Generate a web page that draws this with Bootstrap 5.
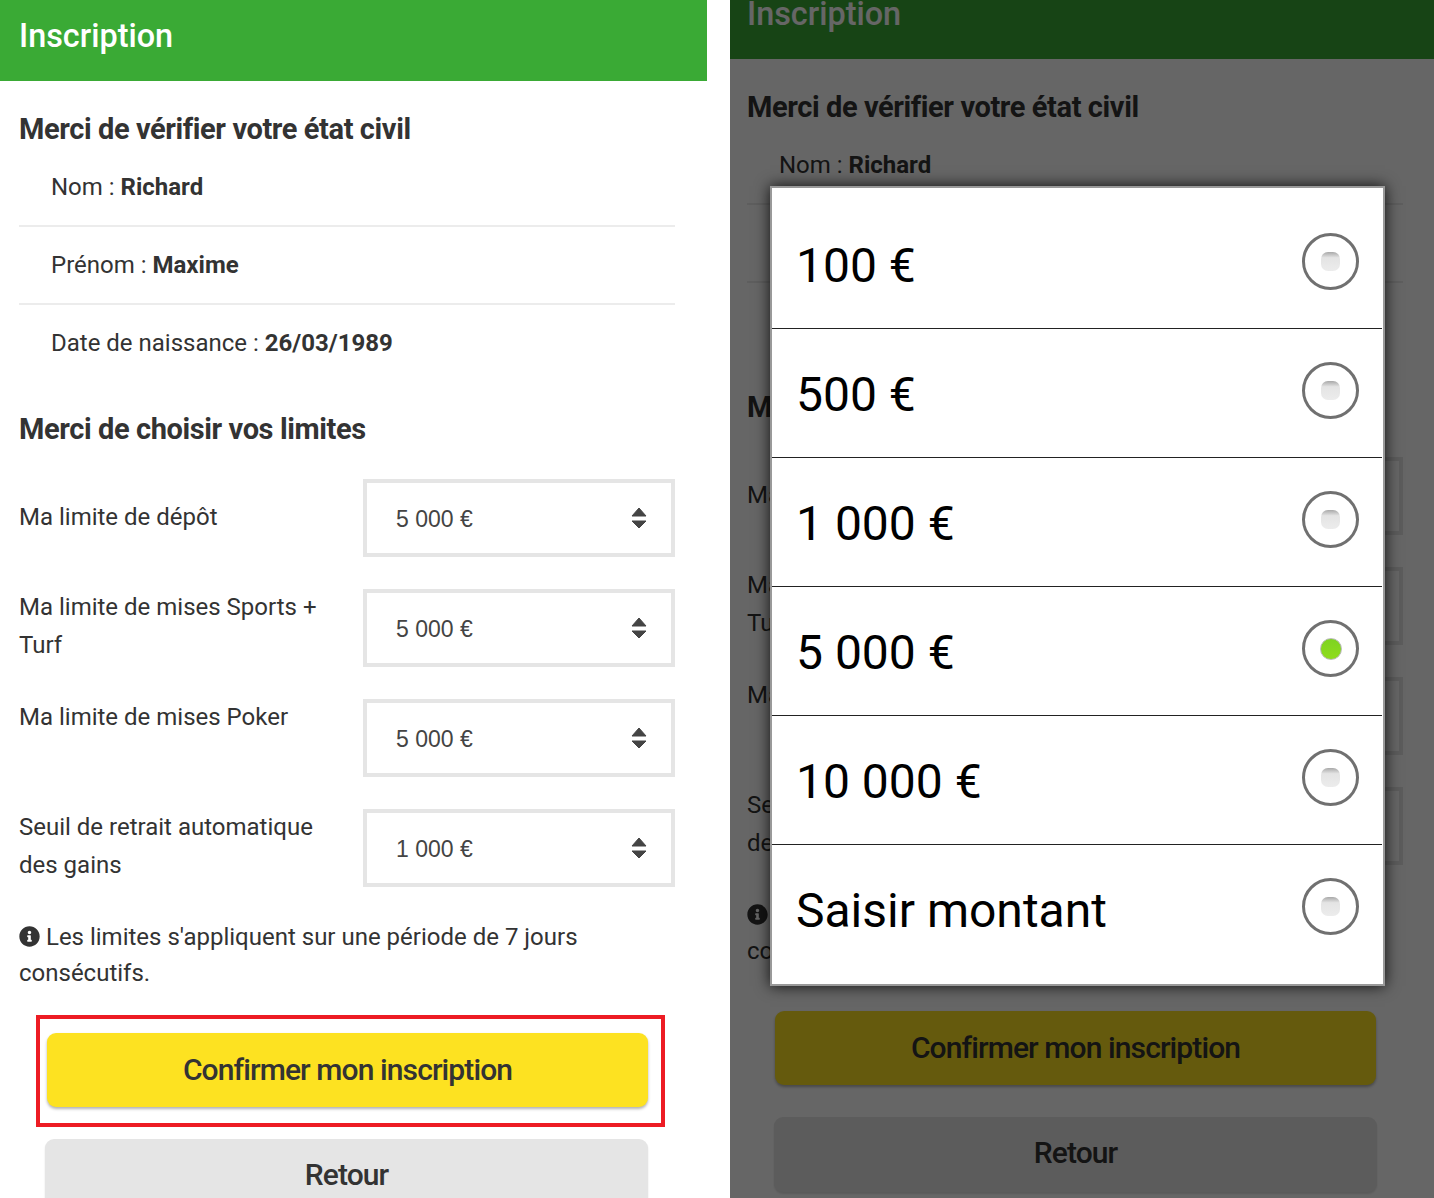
<!DOCTYPE html>
<html lang="fr">
<head>
  <meta charset="UTF-8">
  <meta name="viewport" content="width=device-width, initial-scale=1.0">
  <title>Inscription</title>
  <link href="https://cdn.jsdelivr.net/npm/bootstrap@5.3.0/dist/css/bootstrap.min.css" rel="stylesheet">
  <style>
    html, body { height: 1198px; overflow: hidden; }
    body { background: #fff; color: #333; font-family: Roboto, "Liberation Sans", sans-serif; font-size: 24px; }
    .phone { height: 1198px; overflow: hidden; position: relative; flex: none; }
    .phone-a { width: 707px; }
    .phone-b { width: 704px; margin-left: 23px; }
    .phone-b .phone-inner { margin-top: -22px; }
    .app-head { background: #3aaa35; color: #fff; height: 81px; font-size: 32.4px; font-weight: 500; line-height: 72px; padding-left: 19px; }
    .phone-b .app-head { padding-left: 17px; }
    .pane { width: 656px; margin-left: 19px; }
    .phone-b .pane { margin-left: 17px; }
    .pane-title { font-size: 29px; font-weight: 700; line-height: 38px; margin: 0; color: #333; letter-spacing: -.4px; }
    .first-title { margin-top: 29px; margin-bottom: 1px; }
    .second-title { margin-top: 27px; margin-bottom: 31px; }
    .civil-row { height: 78px; line-height: 76px; padding: 0 0 0 32px; border: 0; border-bottom: 2px solid #ececec; border-radius: 0 !important; color: #333; background: transparent; }
    .civil-row:last-child { border-bottom: 0; }
    .limit-row { height: 78px; margin-bottom: 32px; }
    .limit-label { flex: 0 0 344px; padding-right: 20px; margin-top: -1px; line-height: 38px; }
    .limit-label-mid { padding-top: 20px; }
    .limit-select { flex: 0 0 312px; height: 78px; border: 4px solid #e5e5e5; border-radius: 0; padding: 2px 24px 0 29px; background-image: none; font-family: "Liberation Sans", sans-serif; font-size: 23px; color: #444; }
    .limit-select svg { margin-top: -2px; }
    .info-note { line-height: 36px; margin: 1px 0 24px; }
    .info-note svg { width: 21px; height: 21px; vertical-align: -2px; fill: #333; }
    .cta-frame { margin-left: 36px; width: 629px; height: 112px; border: 4px solid #ed1c24; padding: 14px 13px 0 7px; }
    .phone-b .cta-frame { margin-left: 34px; border-color: transparent; }
    .app-btn { display: block; width: 100%; height: 74px; border-radius: 9px; border: 0; font-size: 30px; font-weight: 500; color: #333; padding: 0 0 2px; letter-spacing: -.9px; }
    .btn-yellow { background: #fde221; box-shadow: 0 2px 3px rgba(0,0,0,.3); }
    .btn-grey { background: #e5e5e5; width: 603px; height: 75px; margin: 12px 0 0 45px; padding-bottom: 5px; box-shadow: 0 2px 2px rgba(0,0,0,.12); }
    .phone-b .btn-grey { margin-left: 44px; }
    .dim-layer { position: absolute; inset: 0; background: rgba(0,0,0,.6); }
    .choice-box { position: absolute; left: 40px; top: 186px; width: 615px; height: 800px; background: #fff; border: 2px solid #999; box-shadow: 0 0 14px rgba(0,0,0,.85); }
    .choice-row { height: 129px; margin-right: 1px; padding: 0 23px 0 24px; border-bottom: 1px solid #222; color: #000; font-size: 48px; }
    .choice-row:first-child { height: 141px; padding-top: 12px; }
    .choice-row:last-child { height: 139px; padding-bottom: 12px; border-bottom: 0; }
    .choice-text { position: relative; top: 2px; }
    .choice-ring { width: 57px; height: 57px; margin-top: -5px; border: 3px solid #707070; border-radius: 50%; }
    .choice-dot { width: 19px; height: 19px; border-radius: 7px; background: linear-gradient(#a8a8a8, #e4e4e4 30%, #ececec); }
    .choice-dot-on { width: 22px; height: 22px; border-radius: 50%; border: 1px solid #bbb; background: linear-gradient(#7ed321, #8fdc1c); }
  </style>
</head>
<body>
  <div class="d-flex">

    <div class="phone phone-a">
      <div class="phone-inner">
        <div class="app-head">Inscription</div>
        <div class="pane">
          <h2 class="pane-title first-title">Merci de vérifier votre état civil</h2>
          <div class="list-group">
            <div class="list-group-item civil-row">Nom : <b>Richard</b></div>
            <div class="list-group-item civil-row">Prénom : <b>Maxime</b></div>
            <div class="list-group-item civil-row">Date de naissance : <b>26/03/1989</b></div>
          </div>
          <h2 class="pane-title second-title">Merci de choisir vos limites</h2>
          <div class="d-flex limit-row">
            <div class="limit-label limit-label-mid">Ma limite de dépôt</div>
            <div class="form-select limit-select d-flex align-items-center justify-content-between">5 000 €
              <svg width="16" height="22" viewBox="0 0 16 22"><path d="M8 1 15 9H1zM1 14H15L8 21z" fill="#444" stroke="#444" stroke-linejoin="round"/></svg>
            </div>
          </div>
          <div class="d-flex limit-row">
            <div class="limit-label">Ma limite de mises Sports + Turf</div>
            <div class="form-select limit-select d-flex align-items-center justify-content-between">5 000 €
              <svg width="16" height="22" viewBox="0 0 16 22"><path d="M8 1 15 9H1zM1 14H15L8 21z" fill="#444" stroke="#444" stroke-linejoin="round"/></svg>
            </div>
          </div>
          <div class="d-flex limit-row">
            <div class="limit-label">Ma limite de mises Poker</div>
            <div class="form-select limit-select d-flex align-items-center justify-content-between">5 000 €
              <svg width="16" height="22" viewBox="0 0 16 22"><path d="M8 1 15 9H1zM1 14H15L8 21z" fill="#444" stroke="#444" stroke-linejoin="round"/></svg>
            </div>
          </div>
          <div class="d-flex limit-row">
            <div class="limit-label">Seuil de retrait automatique des gains</div>
            <div class="form-select limit-select d-flex align-items-center justify-content-between">1 000 €
              <svg width="16" height="22" viewBox="0 0 16 22"><path d="M8 1 15 9H1zM1 14H15L8 21z" fill="#444" stroke="#444" stroke-linejoin="round"/></svg>
            </div>
          </div>
          <p class="info-note">
            <svg viewBox="0 0 512 512"><path d="M256 8C119.043 8 8 119.083 8 256c0 136.997 111.043 248 248 248s248-111.003 248-248C504 119.083 392.957 8 256 8zm0 110c23.196 0 42 18.804 42 42s-18.804 42-42 42-42-18.804-42-42 18.804-42 42-42zm56 254c0 6.627-5.373 12-12 12h-88c-6.627 0-12-5.373-12-12v-24c0-6.627 5.373-12 12-12h12v-64h-12c-6.627 0-12-5.373-12-12v-24c0-6.627 5.373-12 12-12h64c6.627 0 12 5.373 12 12v100h12c6.627 0 12 5.373 12 12v24z"/></svg>
            Les limites s'appliquent sur une période de 7 jours consécutifs.
          </p>
        </div>
        <div class="cta-frame">
          <button type="button" class="btn app-btn btn-yellow">Confirmer mon inscription</button>
        </div>
        <button type="button" class="btn app-btn btn-grey">Retour</button>
      </div>
    </div>

    <div class="phone phone-b">
      <div class="phone-inner">
        <div class="app-head">Inscription</div>
        <div class="pane">
          <h2 class="pane-title first-title">Merci de vérifier votre état civil</h2>
          <div class="list-group">
            <div class="list-group-item civil-row">Nom : <b>Richard</b></div>
            <div class="list-group-item civil-row">Prénom : <b>Maxime</b></div>
            <div class="list-group-item civil-row">Date de naissance : <b>26/03/1989</b></div>
          </div>
          <h2 class="pane-title second-title">Merci de choisir vos limites</h2>
          <div class="d-flex limit-row">
            <div class="limit-label limit-label-mid">Ma limite de dépôt</div>
            <div class="form-select limit-select d-flex align-items-center justify-content-between">5 000 €
              <svg width="16" height="22" viewBox="0 0 16 22"><path d="M8 1 15 9H1zM1 14H15L8 21z" fill="#444" stroke="#444" stroke-linejoin="round"/></svg>
            </div>
          </div>
          <div class="d-flex limit-row">
            <div class="limit-label">Ma limite de mises Sports + Turf</div>
            <div class="form-select limit-select d-flex align-items-center justify-content-between">5 000 €
              <svg width="16" height="22" viewBox="0 0 16 22"><path d="M8 1 15 9H1zM1 14H15L8 21z" fill="#444" stroke="#444" stroke-linejoin="round"/></svg>
            </div>
          </div>
          <div class="d-flex limit-row">
            <div class="limit-label">Ma limite de mises Poker</div>
            <div class="form-select limit-select d-flex align-items-center justify-content-between">5 000 €
              <svg width="16" height="22" viewBox="0 0 16 22"><path d="M8 1 15 9H1zM1 14H15L8 21z" fill="#444" stroke="#444" stroke-linejoin="round"/></svg>
            </div>
          </div>
          <div class="d-flex limit-row">
            <div class="limit-label">Seuil de retrait automatique des gains</div>
            <div class="form-select limit-select d-flex align-items-center justify-content-between">1 000 €
              <svg width="16" height="22" viewBox="0 0 16 22"><path d="M8 1 15 9H1zM1 14H15L8 21z" fill="#444" stroke="#444" stroke-linejoin="round"/></svg>
            </div>
          </div>
          <p class="info-note">
            <svg viewBox="0 0 512 512"><path d="M256 8C119.043 8 8 119.083 8 256c0 136.997 111.043 248 248 248s248-111.003 248-248C504 119.083 392.957 8 256 8zm0 110c23.196 0 42 18.804 42 42s-18.804 42-42 42-42-18.804-42-42 18.804-42 42-42zm56 254c0 6.627-5.373 12-12 12h-88c-6.627 0-12-5.373-12-12v-24c0-6.627 5.373-12 12-12h12v-64h-12c-6.627 0-12-5.373-12-12v-24c0-6.627 5.373-12 12-12h64c6.627 0 12 5.373 12 12v100h12c6.627 0 12 5.373 12 12v24z"/></svg>
            Les limites s'appliquent sur une période de 7 jours consécutifs.
          </p>
        </div>
        <div class="cta-frame">
          <button type="button" class="btn app-btn btn-yellow">Confirmer mon inscription</button>
        </div>
        <button type="button" class="btn app-btn btn-grey">Retour</button>
      </div>
      <div class="dim-layer"></div>
      <div class="choice-box">
        <div class="choice-row d-flex align-items-center justify-content-between"><span class="choice-text">100 €</span><span class="choice-ring d-flex align-items-center justify-content-center"><span class="choice-dot"></span></span></div>
        <div class="choice-row d-flex align-items-center justify-content-between"><span class="choice-text">500 €</span><span class="choice-ring d-flex align-items-center justify-content-center"><span class="choice-dot"></span></span></div>
        <div class="choice-row d-flex align-items-center justify-content-between"><span class="choice-text">1 000 €</span><span class="choice-ring d-flex align-items-center justify-content-center"><span class="choice-dot"></span></span></div>
        <div class="choice-row d-flex align-items-center justify-content-between"><span class="choice-text">5 000 €</span><span class="choice-ring d-flex align-items-center justify-content-center"><span class="choice-dot-on"></span></span></div>
        <div class="choice-row d-flex align-items-center justify-content-between"><span class="choice-text">10 000 €</span><span class="choice-ring d-flex align-items-center justify-content-center"><span class="choice-dot"></span></span></div>
        <div class="choice-row d-flex align-items-center justify-content-between"><span class="choice-text">Saisir montant</span><span class="choice-ring d-flex align-items-center justify-content-center"><span class="choice-dot"></span></span></div>
      </div>
    </div>

  </div>
  <script src="https://cdn.jsdelivr.net/npm/bootstrap@5.3.0/dist/js/bootstrap.bundle.min.js"></script>
</body>
</html>
